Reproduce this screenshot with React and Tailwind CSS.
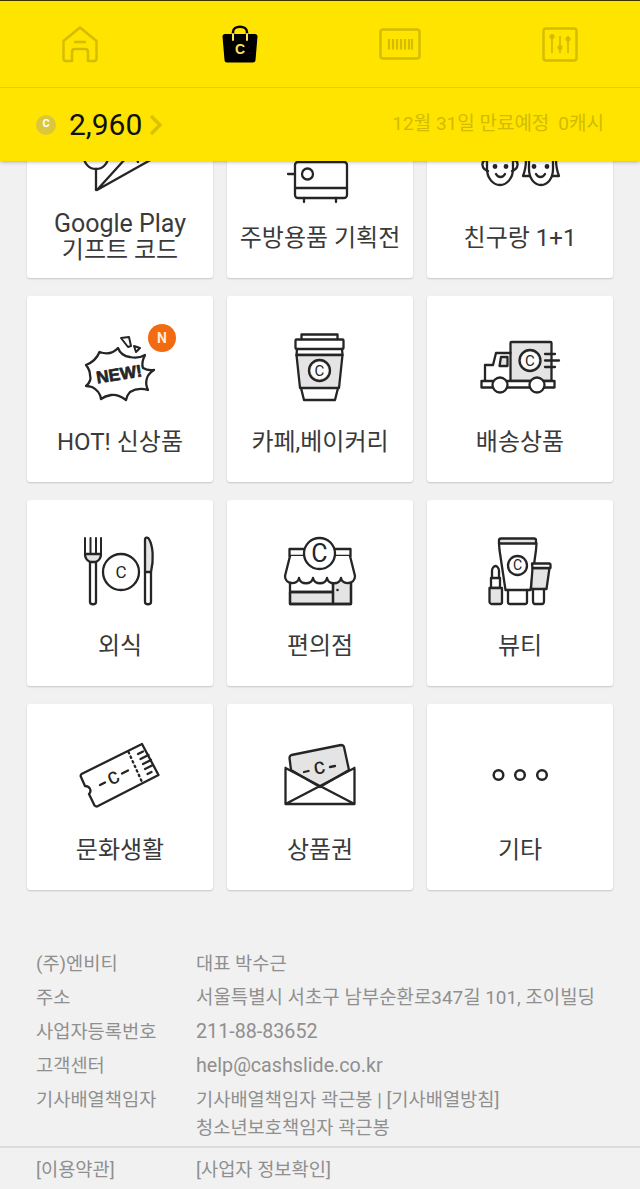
import React from 'react';

const INK = '#252525';
const FILL = '#e4e4e4';
const DIM = '#d4bd00';

// every icon is drawn in a 100x84 box, centred in the tile
const Ic = ({ children }) => (
  <svg width="100" height="84" viewBox="0 0 100 84" fill="none" stroke={INK} strokeWidth="2.300" strokeLinejoin="round" strokeLinecap="round">
    {children}
  </svg>
);

const Cc = ({ x, y, size, rotate = 0, weight = 400 }) => (
  <text
    x={x}
    y={y + size * 0.35}
    textAnchor="middle"
    fontFamily="Roboto"
    fontWeight={weight}
    fontSize={size}
    fill={INK}
    stroke="none"
    transform={rotate ? `rotate(${rotate} ${x} ${y})` : undefined}
  >
    C
  </text>
);

const PlaneIcon = () => (
  <Ic>
    <circle cx="26" cy="37" r="12" />
    <path d="M26 49v21" />
    <path d="M27 70L56 38M27 70L84 38M66 37l2 5" />
  </Ic>
);

const OvenIcon = () => (
  <Ic>
    <rect x="25" y="42" width="52" height="36" rx="3" />
    <path d="M25 68h52M34 78v4M66 78v4M18 54h7M33 41h1M67 41h1" />
    <circle cx="37.500" cy="54" r="5.500" />
  </Ic>
);

const FacesIcon = () => (
  <Ic>
    <path d="M17 39v10c0 9 6 16 13 16s13-7 13-16V39" />
    <path d="M16 40c-5 1-5 9 2 11M44 40c5 1 5 9-2 11" />
    <path d="M59 39v10c0 9 5 16 12 16s12-7 12-16V39" />
    <path d="M56 39c0 7-1 12-3 17l7 0M86 39c0 7 1 12 3 17l-7 0" />
    <circle cx="25" cy="46.500" r="1.300" fill={INK} />
    <circle cx="36" cy="46.500" r="1.300" fill={INK} />
    <circle cx="64" cy="46.500" r="1.300" fill={INK} />
    <circle cx="77" cy="46.500" r="1.300" fill={INK} />
    <path d="M26 54c2 4 7 4 9 0M66 54c2 4 7 4 9 0" />
  </Ic>
);

const NewIcon = () => (
  <Ic>
    <path d="M16 41Q26 37 29.500 28Q41 32 48 24Q51 32 60 33Q68 35 75 31Q71 39 73 44Q78 47 84 46Q78 50 77 54Q75 60 78 66Q68 63 60 68Q57 71 56 76Q48 70 41 71Q35 72 31 75Q30 67 22 63Q18 62 16 62Q22 57 20 51Q20 46 16 41z" />
    <text
      x="49"
      y="56"
      textAnchor="middle"
      fontFamily="Liberation Sans"
      fontWeight="700"
      fontSize="17"
      textLength="46"
      lengthAdjust="spacingAndGlyphs"
      fill={INK}
      stroke={INK}
      strokeWidth="0.700"
      transform="rotate(-9 49 50)"
    >
      NEW!
    </text>
    <path d="M51 14l8-1 2 9-3 1zM64 22l6 2-4 4z" strokeWidth="2" />
  </Ic>
);

const CupIcon = () => (
  <Ic>
    <path d="M31.500 15v-4.500h36V15" />
    <rect x="25.500" y="15.500" width="48" height="9.500" rx="1" />
    <path d="M27 25l-0.500 6h46l-0.500-6" />
    <path d="M26.500 31h46L69 64H30z" fill={FILL} />
    <path d="M31 64l3 12h31l3-12" />
    <circle cx="49.500" cy="46.500" r="10.500" />
    <circle cx="49.500" cy="46.500" r="8.500" fill="#fff" stroke="none" />
    <Cc x={49.500} y={46.500} size={15} />
  </Ic>
);

const TruckIcon = () => (
  <Ic>
    <rect x="40.500" y="18" width="41" height="39" rx="1" fill={FILL} />
    <path d="M40.500 29H26l-3 12h-8v16" />
    <path d="M31 33h6.500v9H29.500z" fill={FILL} />
    <rect x="11.500" y="57" width="73" height="6.500" fill="#fff" />
    <circle cx="30" cy="61" r="7.500" fill="#fff" />
    <circle cx="67" cy="61" r="7.500" fill="#fff" />
    <circle cx="60" cy="36.500" r="10.500" />
    <circle cx="60" cy="36.500" r="8.500" fill="#fff" stroke="none" />
    <Cc x={60} y={36.500} size={15} />
    <path d="M75 30h10M75 36.500h14M75 43h10" />
  </Ic>
);

const CutleryIcon = () => (
  <Ic>
    <path d="M15 26c0 5 3 7 5 8h6c2-1 5-3 5-8z" fill={FILL} />
    <path d="M15 10v16M20.500 10v16M26 10v16M31 10v16" strokeWidth="2" />
    <path d="M20 34v40c0 3 6 3 6 0V34" />
    <circle cx="51" cy="44" r="18" />
    <Cc x={51} y={44} size={17} />
    <path d="M75 12c0-3 3-3 4-1 4 7 5 20 2 33h-6z" fill={FILL} />
    <path d="M75 44v30c0 3 6 3 6 0V44" />
  </Ic>
);

const StoreIcon = () => (
  <Ic>
    <rect x="19.500" y="21" width="61" height="7" />
    <path d="M63 52h18v24H63zM20 64h43v12H20z" fill={FILL} />
    <path d="M20 52v24h61V52M63 52v24M20 64h43" />
    <path d="M20 28l-5 20c0 9 13 9 14 2 1 7 13 7 14 0 1 7 13 7 14 0 1 7 13 7 14 0 1 7 14 7 14-2l-5-20" fill="#fff" />
    <circle cx="67.500" cy="62" r="1.300" fill={INK} stroke="none" />
    <circle cx="49.500" cy="25.500" r="15.500" fill="#fff" />
    <Cc x={49.500} y={25.500} size={25} />
  </Ic>
);

const BeautyIcon = () => (
  <Ic>
    <path d="M31 10.500h33c1.500 0 2 1 2 2v3H29v-3c0-1 .5-2 2-2z" fill={FILL} />
    <path d="M29 15.500L29.500 22l6 40h25l5.500-40 .5-6.500" />
    <path d="M38 62v12c0 1 1 2 2 2h15c1 0 2-1 2-2V62" />
    <circle cx="47.500" cy="37.500" r="9.500" />
    <Cc x={47.500} y={37.500} size={14} />
    <path d="M62.500 40h17L76.500 61H61z" fill={FILL} />
    <path d="M62 35.500h17c1 0 1.500 .5 1.500 1.500v3h-18z" fill="#fff" />
    <path d="M63 61v12c0 2 1 3 2 3h7c1 0 2-1 2-3V61" />
    <path d="M22 50V43c0-3 2-5 3.500-5S29 40 29 43v7" />
    <path d="M21 50h9v10h-9z" />
    <path d="M19.500 60h12.500v14c0 1-1 2-2 2h-8c-1 0-2.500-1-2.500-2z" fill={FILL} />
  </Ic>
);

const TicketIcon = () => (
  <Ic>
    <path d="M72 12L88.500 43 27 74.500c-1 0-2-.5-2.500-1L19 62c3-3 1-8-4-8L11 45c-.5-1-.5-2 .5-3z" />
    <path d="M58.500 20L72 50" strokeDasharray="1.500 3.500" />
    <path d="M68 22l5-2.500M70.500 27l8-4M73 32l8-4M75 37l8-4M77.500 42l4-2" />
    <path d="M30 53l5-2.500M52 41.500l6-3" />
    <Cc x={43.500} y={46} size={17} rotate={-27} weight={500} />
  </Ic>
);

const EnvelopeIcon = () => (
  <Ic>
    <path d="M21 38l-1.500-12c0-1.500.5-2.500 2-3L71 13c1.500 0 2.500.5 3 2l5 23-29 17z" fill={FILL} />
    <path d="M15.500 36v36h69V36M15.500 36L84.500 72M84.500 36L15.500 72" />
    <path d="M34 40l4.500-1M60 35l5-1" />
    <Cc x={49.500} y={36} size={17} rotate={-10} weight={500} />
  </Ic>
);

const DotsIcon = () => (
  <Ic>
    <circle cx="28.500" cy="43" r="4.800" strokeWidth="2.500" />
    <circle cx="50" cy="43" r="4.800" strokeWidth="2.500" />
    <circle cx="72" cy="43" r="4.800" strokeWidth="2.500" />
  </Ic>
);

const tiles = [
  { lines: ['Google Play', '기프트 코드'], Icon: PlaneIcon },
  { lines: ['주방용품 기획전'], Icon: OvenIcon },
  { lines: ['친구랑 1+1'], Icon: FacesIcon },
  { lines: ['HOT! 신상품'], Icon: NewIcon, isNew: true },
  { lines: ['카페,베이커리'], Icon: CupIcon },
  { lines: ['배송상품'], Icon: TruckIcon },
  { lines: ['외식'], Icon: CutleryIcon },
  { lines: ['편의점'], Icon: StoreIcon },
  { lines: ['뷰티'], Icon: BeautyIcon },
  { lines: ['문화생활'], Icon: TicketIcon },
  { lines: ['상품권'], Icon: EnvelopeIcon },
  { lines: ['기타'], Icon: DotsIcon },
];

// latin-only values run a little wider than the korean ones in the reference
const info = [
  { label: '(주)엔비티', values: ['대표 박수근'], size: 'text-[18.700px]' },
  { label: '주소', values: ['서울특별시 서초구 남부순환로347길 101, 조이빌딩'], size: 'text-[18.900px]' },
  { label: '사업자등록번호', values: ['211-88-83652'], size: 'text-[19.700px]' },
  { label: '고객센터', values: ['help@cashslide.co.kr'], size: 'text-[19.700px]' },
  { label: '기사배열책임자', values: ['기사배열책임자 곽근봉 | [기사배열방침]', '청소년보호책임자 곽근봉'], size: 'text-[18.700px]' },
];

const Tile = ({ tile }) => {
  const Icon = tile.Icon;
  const twoLines = tile.lines.length > 1;
  return (
    <div className="relative h-[186px] flex flex-col items-center bg-white rounded-[3px] shadow-[0_1px_2px_rgba(0,0,0,0.18)]">
      <div className="mt-7 h-[84px]">
        <Icon />
      </div>
      {tile.isNew && (
        <span className="absolute left-[121px] top-[28px] w-7 h-7 rounded-full bg-[#f26a12] text-[#ffe9d8] text-[14px] font-bold flex items-center justify-center">
          N
        </span>
      )}
      <div className={`text-[#3a3a3a] text-center ${twoLines ? 'mt-[6px] leading-[27px]' : 'mt-[20px] leading-[28px]'}`}>
        {tile.lines.map((line, i) => (
          <div key={line} className={twoLines && i === 0 ? 'text-[25px]' : 'text-[24px]'}>
            {line}
          </div>
        ))}
      </div>
    </div>
  );
};

export default function App() {
  return (
    <div className="relative w-[640px] h-[1189px] overflow-hidden bg-[#f1f1f1] font-['Roboto','Noto_Sans_CJK_KR',sans-serif]">
      {/* Header over the scrolled list */}
      <div className="absolute top-0 left-0 right-0 z-10 bg-[#ffe400] border-t border-[#3a3500] shadow-[0_1px_4px_rgba(0,0,0,0.3)]">
        <div className="h-[86px] grid grid-cols-4 place-items-center border-b border-[#e6ce00] box-content">
          <svg width="36" height="37" viewBox="0 0 36 37" fill="none" stroke={DIM} strokeWidth="2.500" strokeLinejoin="round" strokeLinecap="round">
            <path d="M1.500 33V15L18 1.500 34.500 15v18c0 1-1 2-2 2H26V26c0-2-1-3-3-3h-10c-2 0-3 1-3 3v9H3.500c-1 0-2-1-2-2z" />
            <path d="M13 16h10" />
          </svg>
          <svg width="36" height="38" viewBox="0 0 36 38">
            <path d="M11 11V7c0-7 14-7 14 0v4" fill="none" stroke="#000" strokeWidth="2.500" />
            <path d="M3 9h30c1.500 0 2.500 1 2.500 2.500L33.500 35c0 1.500-1 2.500-2.500 2.500H5c-1.500 0-2.500-1-2.500-2.500L.5 11.500C.5 10 1.500 9 3 9z" fill="#000" />
            <path d="M11 9v6M25 9v6" stroke="#ffe25a" strokeWidth="2" strokeLinecap="round" />
            <text x="18" y="29" textAnchor="middle" fontFamily="Liberation Sans" fontWeight="700" fontSize="14" fill="#ffe25a">C</text>
          </svg>
          <svg width="42" height="32" viewBox="0 0 42 32" fill="none" stroke={DIM}>
            <rect x="1.500" y="1.500" width="39" height="29" rx="2.500" strokeWidth="2.500" />
            <path d="M10 11v10.500M14 11v10.500M18 11v10.500M22 11v10.500M26 11v10.500M30 11v10.500M33 11v10.500" strokeWidth="2.200" />
          </svg>
          <svg width="36" height="35" viewBox="0 0 36 35" fill="none" stroke={DIM} strokeWidth="2.500">
            <rect x="1.500" y="1.500" width="33" height="32" rx="2.500" />
            <path d="M10 9v17M18 9v17M26 9v17" strokeWidth="1.700" />
            <circle cx="10" cy="9.500" r="2.500" fill={DIM} stroke="none" />
            <circle cx="18" cy="20.500" r="2.500" fill={DIM} stroke="none" />
            <circle cx="26" cy="12" r="2.500" fill={DIM} stroke="none" />
          </svg>
        </div>
        <div className="h-[73px] flex items-center pl-9 pr-9">
          <span className="w-5 h-5 rounded-full bg-[#dcc63c] text-white text-[11px] font-bold flex items-center justify-center">C</span>
          <span className="ml-[13px] text-[30px] text-[#111] leading-none">2,960</span>
          <svg width="14" height="22" viewBox="0 0 14 22" fill="none" stroke="#d9c300" strokeWidth="3.500" className="ml-[7px]">
            <path d="M2 2l9 9-9 9" />
          </svg>
          <span className="ml-auto text-[19px] text-[#d2bb00]">12월 31일 만료예정</span>
          <span className="ml-[9px] text-[19px] text-[#d2bb00]">0캐시</span>
        </div>
      </div>

      {/* Tile grid */}
      <div className="pt-[92px] px-[27px] grid grid-cols-3 gap-x-[14px] gap-y-[18px]">
        {tiles.map((tile) => (
          <Tile key={tile.lines[0]} tile={tile} />
        ))}
      </div>

      {/* Company info */}
      <div className="mt-[60px] px-9 text-[#8f8f8f] leading-[28px]">
        {info.map((row) => (
          <div key={row.label} className="flex mb-[6px] last:mb-[4px]">
            <div className="w-[160px] shrink-0 text-[18.700px]">{row.label}</div>
            <div className={row.size}>
              {row.values.map((v) => (
                <div key={v}>{v}</div>
              ))}
            </div>
          </div>
        ))}
      </div>
      <div className="border-t-2 border-[#dcdcdc] px-9 pt-[8px] flex text-[18.700px] text-[#8f8f8f] leading-[28px]">
        <div className="w-[160px] shrink-0">[이용약관]</div>
        <div>[사업자 정보확인]</div>
      </div>
    </div>
  );
}
